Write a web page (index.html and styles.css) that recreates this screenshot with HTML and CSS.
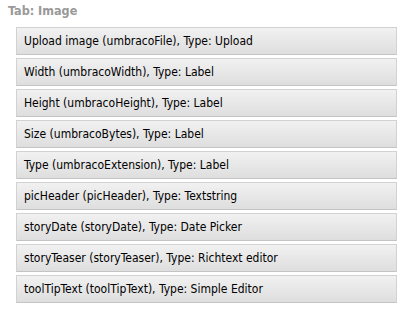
FILE: index.html
```html
<!DOCTYPE html>
<html lang="en">
<head>
    <meta charset="UTF-8">
    <title>Tab: Image</title>
    <link rel="stylesheet" href="styles.css">
</head>
<body>
<div class="tab">
    <h2 class="tab-title">Tab: Image</h2>
    <ul class="props">
        <li class="prop">Upload image (umbracoFile), Type: Upload</li>
        <li class="prop">Width (umbracoWidth), Type: Label</li>
        <li class="prop">Height (umbracoHeight), Type: Label</li>
        <li class="prop">Size (umbracoBytes), Type: Label</li>
        <li class="prop">Type (umbracoExtension), Type: Label</li>
        <li class="prop">picHeader (picHeader), Type: Textstring</li>
        <li class="prop">storyDate (storyDate), Type: Date Picker</li>
        <li class="prop">storyTeaser (storyTeaser), Type: Richtext editor</li>
        <li class="prop">toolTipText (toolTipText), Type: Simple Editor</li>
    </ul>
</div>
</body>
</html>
```

FILE: styles.css
```css
body {
    margin: 0;
    background: #fff;
    font-family: "DejaVu Sans Condensed", "DejaVu Sans", sans-serif;
    color: #000;
}

.tab {
    padding: 3px 1px 0 8px;
}

.tab-title {
    margin: 0;
    font-size: 12.5px;
    font-weight: bold;
    color: #999;
    line-height: 16px;
}

.props {
    list-style: none;
    margin: 8px 0 0 8px;
    padding: 0;
    display: flex;
    flex-direction: column;
    gap: 3px;
}

.prop {
    height: 26px;
    line-height: 26px;
    padding: 0 7px;
    font-size: 12px;
    border: 1px solid #d2d2d2;
    border-bottom-color: #c4c4c4;
    background: linear-gradient(#f1f1f1, #dedede);
}
```
